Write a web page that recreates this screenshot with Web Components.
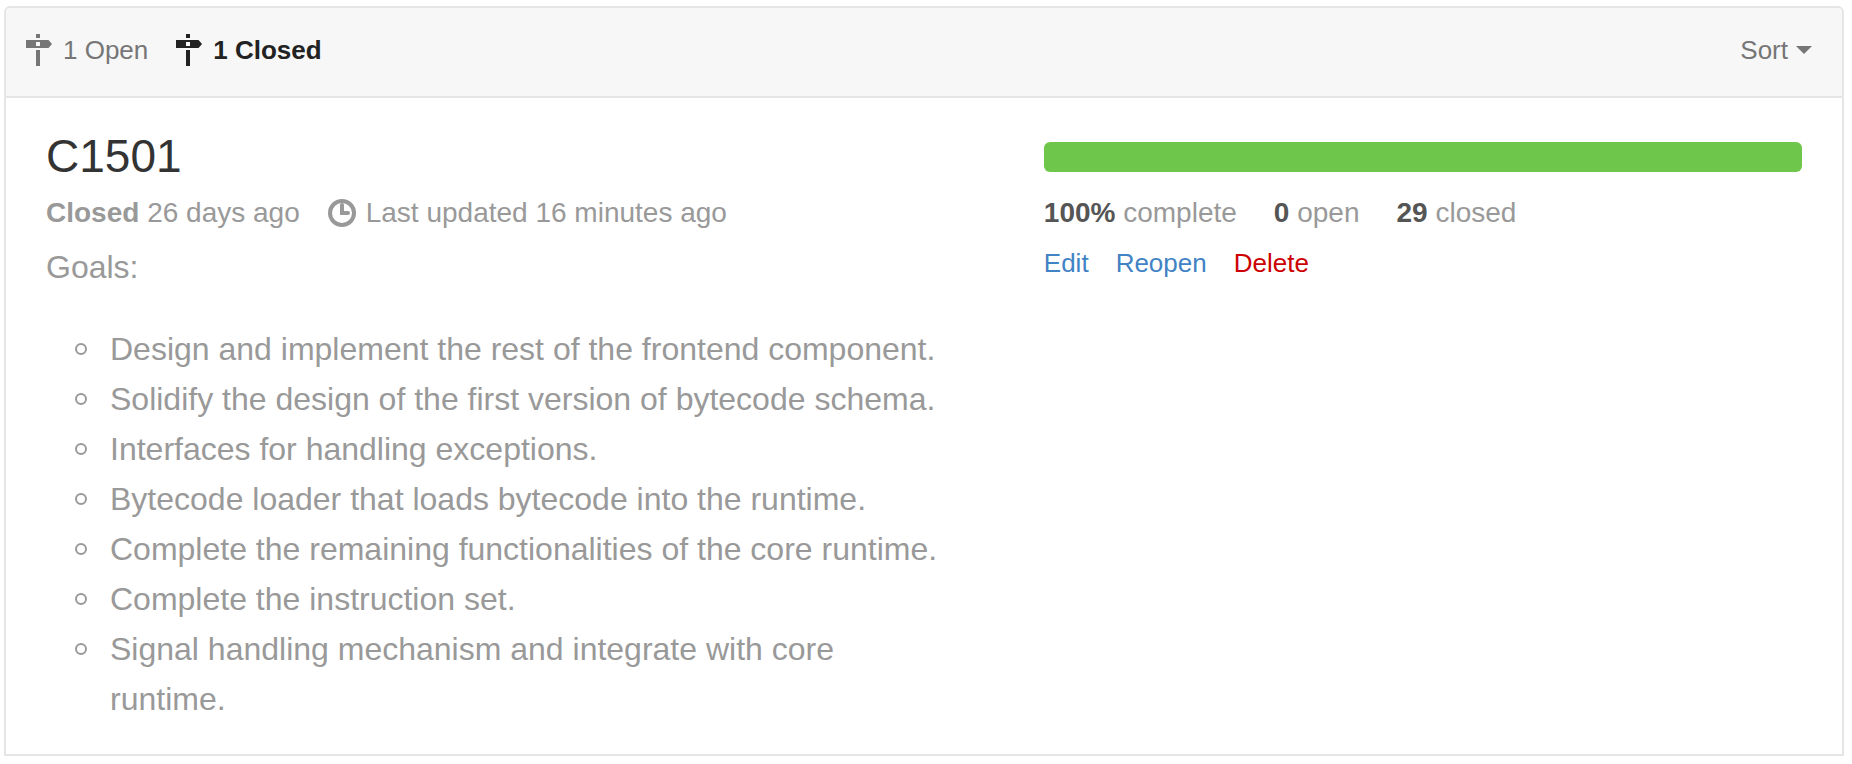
<!DOCTYPE html>
<html lang="en">
<head>
<meta charset="utf-8">
<title>Milestones</title>
<style>
  body { margin: 0; padding: 6px 8px 8px 4px; background: #fff; font-family: "Liberation Sans", Arial, sans-serif; }
</style>
</head>
<body>
<milestone-list>
  <milestone-tab slot="tabs" href="#open" count="1">Open</milestone-tab>
  <milestone-tab slot="tabs" href="#closed" count="1" selected>Closed</milestone-tab>
  <sort-button slot="sort">Sort</sort-button>
  <milestone-item>
    <span slot="title">C1501</span>
    <span slot="state">Closed</span>
    <span slot="when">26 days ago</span>
    <span slot="updated">Last updated 16 minutes ago</span>
    <span slot="intro">Goals:</span>
    <goal-list slot="goals">
      <goal-item>Design and implement the rest of the frontend component.</goal-item>
      <goal-item>Solidify the design of the first version of bytecode schema.</goal-item>
      <goal-item>Interfaces for handling exceptions.</goal-item>
      <goal-item>Bytecode loader that loads bytecode into the runtime.</goal-item>
      <goal-item>Complete the remaining functionalities of the core runtime.</goal-item>
      <goal-item>Complete the instruction set.</goal-item>
      <goal-item>Signal handling mechanism and integrate with core runtime.</goal-item>
    </goal-list>
    <milestone-progress slot="progress" percent="100" open="0" closed="29"></milestone-progress>
  </milestone-item>
</milestone-list>

<script>
  class Base extends HTMLElement {
    constructor() {
      super();
      this.attachShadow({ mode: "open" });
    }
    connectedCallback() {
      this.shadowRoot.innerHTML = this.view();
    }
  }

  customElements.define("milestone-list", class extends Base {
    view() {
      return `
        <style>
          :host { display: block; border: 2px solid #e5e5e5; border-radius: 6px 6px 0 0; }
          header { display: flex; align-items: center; justify-content: space-between;
                   padding: 26px 30px 30px 20px; background: #f7f7f7; border-bottom: 2px solid #e5e5e5; border-radius: 4px 4px 0 0; }
          nav { display: flex; gap: 28px; }
        </style>
        <header><nav aria-label="Milestones"><slot name="tabs"></slot></nav><slot name="sort"></slot></header>
        <main><slot></slot></main>`;
    }
  });

  customElements.define("milestone-tab", class extends Base {
    view() {
      return `
        <style>
          :host { display: block; color: #767676; }
          :host([selected]) { color: #222; font-weight: bold; }
          a { display: flex; align-items: center; gap: 11px; color: inherit; text-decoration: none; font-size: 26px; line-height: 32px; }
          svg { display: block; width: 26px; height: 32px; fill: currentColor; }
        </style>
        <a href="${this.getAttribute("href")}">
          <svg viewBox="0 0 26 32" aria-hidden="true"><path fill-rule="evenodd" d="M10 0h4v4h-4zM0 6h22.500l3.500 4-3.500 4H0zM10 8v4h4V8zM10 16h4v16h-4z"/></svg>
          <span>${this.getAttribute("count")} <slot></slot></span>
        </a>`;
    }
  });

  customElements.define("sort-button", class extends Base {
    view() {
      return `
        <style>
          :host { display: block; }
          button { display: flex; align-items: center; gap: 8px; padding: 0; border: 0; background: none;
                   font: inherit; font-size: 26px; line-height: 32px; color: #767676; cursor: pointer; }
          i { border: 8px solid transparent; border-top-color: currentColor; border-bottom: 0; }
        </style>
        <button type="button" aria-haspopup="true"><slot></slot><i></i></button>`;
    }
  });

  customElements.define("milestone-item", class extends Base {
    view() {
      return `
        <style>
          :host { display: grid; grid-template-columns: 6fr 5fr; gap: 88px; padding: 28px 40px 30px; color: #999; }
          h2 { margin: 0 0 6px; font-size: 46px; font-weight: normal; line-height: 60px; }
          h2 a { color: #333; text-decoration: none; }
          .meta { display: flex; gap: 28px; margin-bottom: 8px; font-size: 28px; line-height: 42px; }
          .updated { display: flex; align-items: center; gap: 10px; }
          svg { display: block; width: 28px; height: 28px; fill: none; stroke: currentColor; stroke-width: 4; }
          p { margin: 0 0 32px; font-size: 32px; line-height: 50px; }
        </style>
        <section>
          <h2><a href="#C1501"><slot name="title"></slot></a></h2>
          <div class="meta">
            <span><b><slot name="state"></slot></b> <slot name="when"></slot></span>
            <span class="updated">
              <svg viewBox="0 0 28 28" aria-hidden="true"><circle cx="14" cy="14" r="12"/><path d="M14 6v8h6" stroke-linecap="round"/></svg>
              <slot name="updated"></slot>
            </span>
          </div>
          <p><slot name="intro"></slot></p>
          <slot name="goals"></slot>
        </section>
        <aside><slot name="progress"></slot></aside>`;
    }
  });

  customElements.define("goal-list", class extends Base {
    connectedCallback() { super.connectedCallback(); this.setAttribute("role", "list"); }
    view() {
      return `
        <style>:host { display: block; padding-left: 29px; font-size: 32px; line-height: 50px; }</style>
        <slot></slot>`;
    }
  });

  customElements.define("goal-item", class extends Base {
    connectedCallback() { super.connectedCallback(); this.setAttribute("role", "listitem"); }
    view() {
      return `
        <style>
          :host { display: grid; grid-template-columns: 12px 1fr; gap: 23px; }
          i { box-sizing: border-box; height: 12px; margin-top: 19px; border: 2px solid currentColor; border-radius: 50%; }
        </style>
        <i></i><span><slot></slot></span>`;
    }
  });

  customElements.define("milestone-progress", class extends Base {
    view() {
      const percent = this.getAttribute("percent");
      return `
        <style>
          :host { display: block; padding-top: 16px; }
          progress { display: block; width: 100%; height: 30px; margin-bottom: 20px; border: 0; border-radius: 6px;
                     overflow: hidden; appearance: none; background: #e5e5e5; }
          progress::-webkit-progress-bar { background: #e5e5e5; }
          progress::-webkit-progress-value { background: #6ec64b; }
          progress::-moz-progress-bar { background: #6ec64b; }
          .stats { display: flex; gap: 37px; margin-bottom: 8px; font-size: 28px; line-height: 42px; }
          b { color: #555; }
          .actions { display: flex; gap: 27px; font-size: 26px; line-height: 42px; }
          a { color: #4183c4; text-decoration: none; }
          button { padding: 0; border: 0; background: none; font: inherit; color: #c00; cursor: pointer; }
        </style>
        <progress max="100" value="${percent}" aria-label="Milestone completion"></progress>
        <div class="stats">
          <span><b>${percent}%</b> complete</span>
          <span><b>${this.getAttribute("open")}</b> open</span>
          <span><b>${this.getAttribute("closed")}</b> closed</span>
        </div>
        <div class="actions"><a href="#edit">Edit</a><a href="#reopen">Reopen</a><button type="button">Delete</button></div>`;
    }
  });
</script>
</body>
</html>
